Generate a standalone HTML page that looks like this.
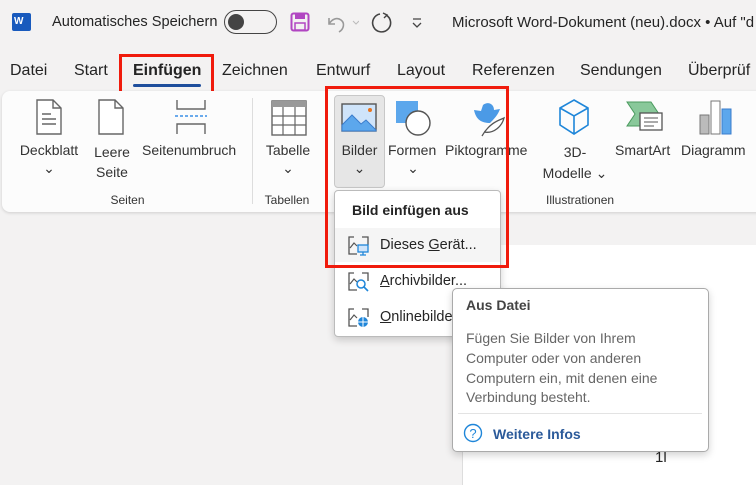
<!DOCTYPE html>
<html><head><meta charset="utf-8"><style>
*{margin:0;padding:0;box-sizing:border-box}
body{width:756px;height:478px;overflow:hidden;background:#f3f2f2;font-family:"Liberation Sans",sans-serif;color:#242424;position:relative}
.a{position:absolute;white-space:nowrap}
.t{font-size:16px;top:62px}
.r{font-size:14px;color:#333}
.c{text-align:center}
</style></head><body>
<!-- title bar -->
<div class="a" style="left:12px;top:13px;width:19px;height:18px;background:#185abd;border-radius:2px;color:#fff;font-size:10px;font-weight:bold;line-height:18px;padding-left:2px">W</div>
<div class="a" style="left:52px;top:14px;font-size:14.6px">Automatisches Speichern</div>
<div class="a" style="left:224px;top:10px;width:53px;height:24px;border:1.5px solid #444;border-radius:12px"></div>
<div class="a" style="left:228px;top:14px;width:16px;height:16px;background:#444;border-radius:50%"></div>
<svg class="a" style="left:290px;top:12px" width="20" height="20"><rect x="1.5" y="1.5" width="17" height="17" rx="2" fill="none" stroke="#b146c2" stroke-width="2"/><rect x="5" y="2" width="10" height="5" fill="#b146c2"/><rect x="5" y="11" width="10" height="7" fill="none" stroke="#b146c2" stroke-width="1.5"/></svg>
<svg class="a" style="left:325px;top:12px" width="34" height="22"><path d="M4 6v6h6M4 12c3-5 8-7 12-4s3 9-2 12" fill="none" stroke="#999" stroke-width="1.6"/><path d="M28 9l3 3 3-3" fill="none" stroke="#bbb" stroke-width="1"/></svg>
<svg class="a" style="left:371px;top:11px" width="24" height="24"><path d="M9 3a9 9 0 1 0 6 1" fill="none" stroke="#444" stroke-width="1.6"/><path d="M12 2l4 2-3 3" fill="none" stroke="#444" stroke-width="1.4"/></svg>
<svg class="a" style="left:411px;top:17px" width="12" height="12"><path d="M2 2h8M2 6l4 4 4-4" fill="none" stroke="#444" stroke-width="1.3"/></svg>
<div class="a" style="left:452px;top:14px;font-size:15px">Microsoft Word-Dokument (neu).docx • Auf "d</div>
<!-- tabs -->
<div class="a t" style="left:10px">Datei</div>
<div class="a t" style="left:74px">Start</div>
<div class="a t" style="left:133px;font-weight:bold">Einfügen</div>
<div class="a" style="left:133px;top:84px;width:68px;height:3px;background:#1e4e9c;border-radius:2px"></div>
<div class="a" style="left:119px;top:54px;width:95px;height:44px;border:3px solid #f01b0c"></div>
<div class="a t" style="left:222px">Zeichnen</div>
<div class="a t" style="left:316px">Entwurf</div>
<div class="a t" style="left:397px">Layout</div>
<div class="a t" style="left:472px">Referenzen</div>
<div class="a t" style="left:580px">Sendungen</div>
<div class="a t" style="left:688px">Überprüf</div>
<!-- ribbon -->
<div class="a" style="left:2px;top:91px;width:770px;height:121px;background:#fcfcfc;border-radius:8px;box-shadow:0 1px 3px rgba(0,0,0,.15)"></div>
<div class="a" style="left:252px;top:98px;width:1px;height:106px;background:#ddd"></div>
<svg class="a" style="left:35px;top:99px" width="28" height="36"><path d="M2 1h16l8 8v26H2z M18 1v8h8" fill="#fff" stroke="#666" stroke-width="1.4"/><path d="M7 15h9M7 20h14M7 25h14" stroke="#666" stroke-width="1.4"/></svg>
<svg class="a" style="left:97px;top:99px" width="28" height="36"><path d="M2 1h16l8 8v26H2z M18 1v8h8" fill="#fff" stroke="#666" stroke-width="1.4"/></svg>
<svg class="a" style="left:174px;top:99px" width="34" height="36"><path d="M3 1v9h28V1M3 35v-10h28v10" fill="none" stroke="#666" stroke-width="1.4"/><path d="M1 17h32" stroke="#3a8ee6" stroke-width="1.4" stroke-dasharray="3 2"/></svg>
<svg class="a" style="left:271px;top:100px" width="36" height="36"><rect x="1" y="1" width="34" height="34" fill="#fff" stroke="#666" stroke-width="1.4"/><rect x="1" y="1" width="34" height="6" fill="#999"/><path d="M12 7v28M24 7v28M1 16h34M1 25h34" stroke="#666" stroke-width="1.2"/></svg>
<div class="a r c" style="left:10px;top:142px;width:78px">Deckblatt</div>
<div class="a r c" style="left:10px;top:160px;width:78px">⌄</div>
<div class="a r c" style="left:86px;top:142px;width:52px;line-height:20px">Leere<br>Seite</div>
<div class="a r" style="left:142px;top:142px">Seitenumbruch</div>
<div class="a r c" style="left:260px;top:142px;width:56px">Tabelle</div>
<div class="a r c" style="left:260px;top:160px;width:56px">⌄</div>
<div class="a c" style="left:60px;top:193px;width:135px;font-size:12px;color:#333">Seiten</div>
<div class="a c" style="left:256px;top:193px;width:62px;font-size:12px;color:#333">Tabellen</div>
<!-- Bilder button -->
<div class="a" style="left:334px;top:95px;width:51px;height:93px;background:#e6e6e6;border:1px solid #c8c8c8;border-radius:4px"></div>
<svg class="a" style="left:341px;top:103px" width="36" height="30"><rect x="1" y="1" width="34" height="27" fill="#cfe4fa" stroke="#555" stroke-width="1.4"/><path d="M1 22l10-10 9 9 5-4 10 10v1H1z" fill="#5ca7ec" stroke="#3a7ccc"/><circle cx="29" cy="7" r="2" fill="#e8741e"/></svg>
<div class="a r c" style="left:334px;top:142px;width:51px">Bilder</div>
<div class="a r c" style="left:334px;top:160px;width:51px">⌄</div>
<svg class="a" style="left:395px;top:100px" width="38" height="36"><rect x="1" y="1" width="22" height="22" fill="#5ca7ec"/><circle cx="23" cy="23" r="12" fill="#fff" stroke="#555" stroke-width="1.4"/></svg>
<div class="a r" style="left:388px;top:142px">Formen</div>
<div class="a r c" style="left:388px;top:160px;width:50px">⌄</div>
<svg class="a" style="left:470px;top:98px" width="36" height="40"><path d="M4 12c2 10 8 13 16 13 4-4 8-8 10-14l-6 1c0-6-6-9-11-5l-2 6z" fill="#4b9ae6"/><path d="M12 38c8-14 18-16 22-18-2 8-10 16-20 14" fill="#fff" stroke="#555" stroke-width="1.3"/></svg>
<div class="a r" style="left:445px;top:142px">Piktogramme</div>
<svg class="a" style="left:557px;top:98px" width="34" height="38"><path d="M17 2l14 8v17l-14 9-14-9V10z M3 10l14 8 14-8 M17 18v18" fill="none" stroke="#1f86d9" stroke-width="1.6"/></svg>
<div class="a r c" style="left:540px;top:142px;width:70px;line-height:21px">3D-<br>Modelle ⌄</div>
<svg class="a" style="left:626px;top:101px" width="38" height="32"><path d="M1 1h24l8 12-8 12H1l8-12z" fill="#89c89a" stroke="#4a9a5e"/><rect x="14" y="12" width="22" height="17" fill="#fff" stroke="#555" stroke-width="1.3"/><path d="M18 17h14M18 21h14M18 25h10" stroke="#555"/></svg>
<div class="a r" style="left:615px;top:142px">SmartArt</div>
<svg class="a" style="left:699px;top:99px" width="34" height="36"><rect x="1" y="16" width="9" height="19" fill="#bbb" stroke="#777"/><rect x="12" y="2" width="9" height="33" fill="#fff" stroke="#777"/><rect x="23" y="10" width="9" height="25" fill="#5ca7ec" stroke="#3a7ccc"/></svg>
<div class="a r" style="left:681px;top:142px">Diagramm</div>
<div class="a" style="left:546px;top:193px;font-size:12px;color:#333">Illustrationen</div>
<!-- document page -->
<div class="a" style="left:462px;top:245px;width:300px;height:240px;background:#fff;border-left:1px solid #ddd"></div>
<div class="a" style="left:655px;top:449px;font-size:15px">1l</div>
<!-- dropdown -->
<div class="a" style="left:334px;top:190px;width:167px;height:147px;background:#fff;border:1px solid #bbb;border-radius:4px;box-shadow:0 3px 8px rgba(0,0,0,.18)"></div>
<div class="a" style="left:335px;top:228px;width:165px;height:34px;background:#f5f5f5"></div>
<div class="a" style="left:352px;top:202px;font-size:14px;font-weight:bold">Bild einfügen aus</div>
<svg class="a" style="left:348px;top:236px" width="22" height="20"><path d="M6 1H1v17h8M14 1h6v8" fill="none" stroke="#555" stroke-width="1.3"/><path d="M2 12l4-5 3 3" fill="none" stroke="#555" stroke-width="1.2"/><rect x="10" y="9" width="10" height="7" fill="#cfe4fa" stroke="#1f86d9" stroke-width="1.3"/><path d="M15 16v3M12 19h6" stroke="#1f86d9" stroke-width="1.3"/></svg>
<div class="a" style="left:380px;top:237px;font-size:14.5px">Dieses <u>G</u>erät...</div>
<svg class="a" style="left:348px;top:272px" width="22" height="20"><path d="M6 1H1v17h8M14 1h6v8" fill="none" stroke="#555" stroke-width="1.3"/><path d="M2 12l4-5 3 3" fill="none" stroke="#555" stroke-width="1.2"/><circle cx="13" cy="12" r="4" fill="none" stroke="#1f86d9" stroke-width="1.5"/><path d="M16 15l4 4" stroke="#1f86d9" stroke-width="1.6"/></svg>
<div class="a" style="left:380px;top:273px;font-size:14.5px"><u>A</u>rchivbilder...</div>
<svg class="a" style="left:348px;top:308px" width="22" height="20"><path d="M6 1H1v17h8M14 1h6v8" fill="none" stroke="#555" stroke-width="1.3"/><path d="M2 12l4-5 3 3" fill="none" stroke="#555" stroke-width="1.2"/><circle cx="15" cy="14" r="5" fill="#1f86d9"/><path d="M10 14h10M15 9v10" stroke="#fff"/></svg>
<div class="a" style="left:380px;top:309px;font-size:14.5px"><u>O</u>nlinebilder</div>
<!-- red box 2 -->
<div class="a" style="left:325px;top:86px;width:184px;height:182px;border:3px solid #f01b0c"></div>
<!-- tooltip -->
<div class="a" style="left:452px;top:288px;width:257px;height:164px;background:#fff;border:1px solid #aaa;border-radius:5px;box-shadow:0 3px 8px rgba(0,0,0,.18)"></div>
<div class="a" style="left:466px;top:297px;font-size:14px;font-weight:bold;color:#444">Aus Datei</div>
<div class="a" style="left:466px;top:329px;font-size:14px;color:#666;line-height:19.8px">Fügen Sie Bilder von Ihrem<br>Computer oder von anderen<br>Computern ein, mit denen eine<br>Verbindung besteht.</div>
<div class="a" style="left:458px;top:413px;width:244px;height:1px;background:#e3e3e3"></div>
<svg class="a" style="left:463px;top:423px" width="20" height="20"><circle cx="10" cy="10" r="8.5" fill="none" stroke="#1f86d9" stroke-width="1.4"/><text x="10" y="15" text-anchor="middle" font-family="Liberation Sans" font-size="13" fill="#1f86d9">?</text></svg>
<div class="a" style="left:493px;top:426px;font-size:14px;font-weight:bold;color:#2b5a9a">Weitere Infos</div>
</body></html>
